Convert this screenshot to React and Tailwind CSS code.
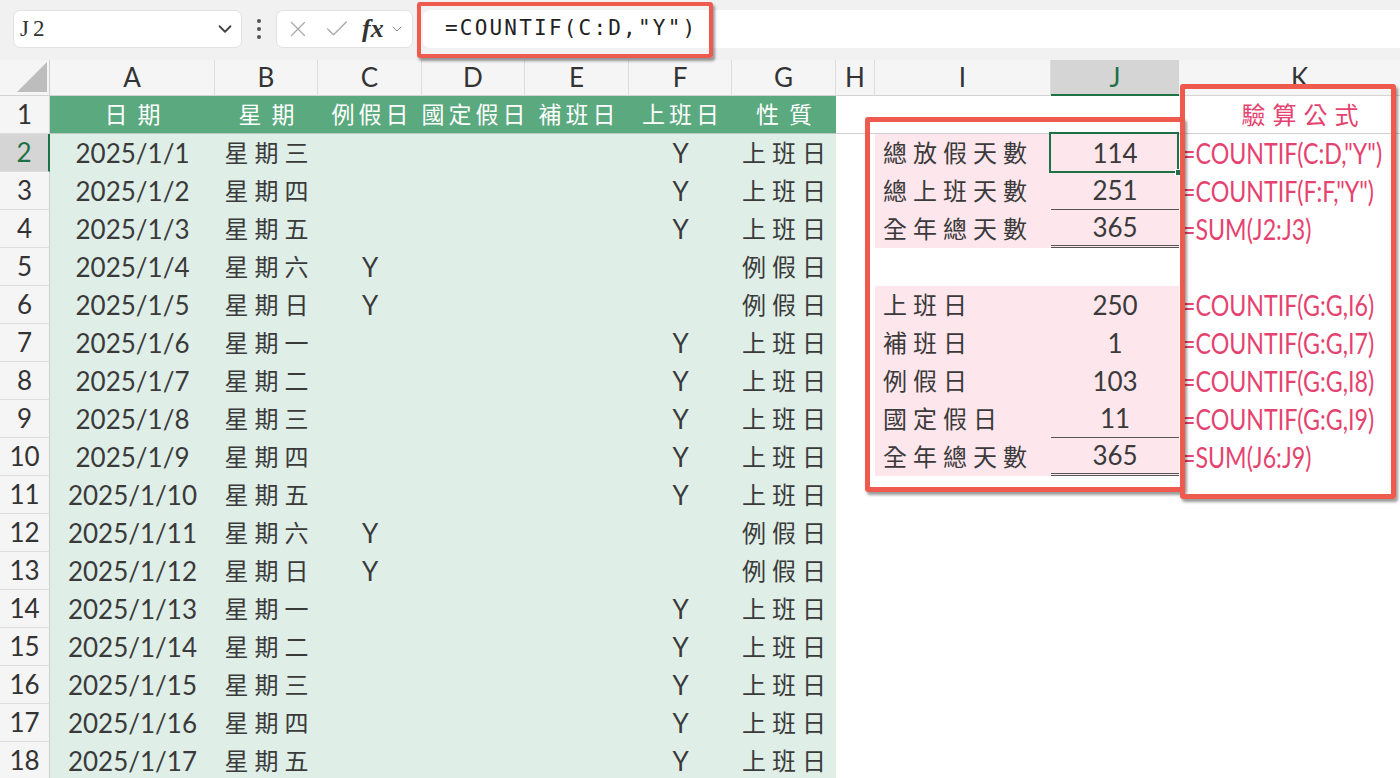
import { X, Check, ChevronDown } from 'lucide-react'

const COLS = ['A', 'B', 'C', 'D', 'E', 'F', 'G', 'H', 'I', 'J', 'K']
const WEEK = ['星期三', '星期四', '星期五', '星期六', '星期日', '星期一', '星期二']
const HEAD = ['日期', '星期', '例假日', '國定假日', '補班日', '上班日', '性質']

const SUMMARY = {
  2: ['總放假天數', '114', '=COUNTIF(C:D,"Y")'],
  3: ['總上班天數', '251', '=COUNTIF(F:F,"Y")'],
  4: ['全年總天數', '365', '=SUM(J2:J3)'],
  6: ['上班日', '250', '=COUNTIF(G:G,I6)'],
  7: ['補班日', '1', '=COUNTIF(G:G,I7)'],
  8: ['例假日', '103', '=COUNTIF(G:G,I8)'],
  9: ['國定假日', '11', '=COUNTIF(G:G,I9)'],
  10: ['全年總天數', '365', '=SUM(J6:J9)'],
}

function buildRows() {
  const rows = []
  for (let d = 1; d <= 17; d++) {
    const wd = WEEK[(d - 1) % 7]
    const off = wd === '星期六' || wd === '星期日'
    rows.push({ date: `2025/1/${d}`, wd, c: off ? 'Y' : '', f: off ? '' : 'Y', g: off ? '例假日' : '上班日' })
  }
  return rows
}

const redBox = 'absolute border-[#ee5a4e] rounded-[3px] shadow-[2px_3px_3px_rgba(0,0,0,0.4)] pointer-events-none'

function TopBar() {
  return (
    <div className="h-[60px] bg-[#f1f1f1] flex items-start pt-[10px] pl-[13px]">
      <div className="w-[229px] h-[38px] bg-white rounded-[7px] border border-[#e2e2e2] flex items-center justify-between pl-[6px] pr-[5px]">
        <span className="font-['Liberation_Serif',serif] text-[23px] tracking-[4px] text-[#333]">J2</span>
        <ChevronDown size={22} strokeWidth={2} className="text-[#444]" />
      </div>
      <div className="w-[34px] h-[38px] flex flex-col items-center justify-center gap-[4px]">
        <div className="w-[4px] h-[4px] rounded-full bg-[#555]" />
        <div className="w-[4px] h-[4px] rounded-full bg-[#555]" />
        <div className="w-[4px] h-[4px] rounded-full bg-[#555]" />
      </div>
      <div className="w-[137px] h-[38px] bg-white rounded-[7px] border border-[#e2e2e2] flex items-center pl-[8px]">
        <X size={26} strokeWidth={1.2} className="text-[#a9a9a9]" />
        <Check size={28} strokeWidth={1.2} className="text-[#a9a9a9] ml-[12px]" />
        <span className="ml-[11px] font-['Liberation_Serif',serif] italic font-semibold text-[26px] text-[#333] leading-none">fx</span>
        <ChevronDown size={16} strokeWidth={1.5} className="text-[#888] ml-[5px]" />
      </div>
      <div className="ml-[10px] flex-1 h-[38px] bg-white rounded-l-[7px] flex items-center pl-[22px]">
        <span className="font-['DejaVu_Sans_Mono',monospace] text-[21px] tracking-[2.2px] text-[#222]">=COUNTIF(C:D,"Y")</span>
      </div>
    </div>
  )
}

function ColumnHeader() {
  return (
    <>
      <div className="bg-[#f5f5f5] border-b border-[#d4d4d4] border-r border-r-[#d0d0d0] relative">
        <div className="absolute right-[2px] bottom-[3px] w-0 h-0 border-l-[30px] border-l-transparent border-b-[30px] border-b-[#bdbdbd]" />
      </div>
      {COLS.map((c) =>
        c === 'J' ? (
          <div key={c} className="bg-[#d5d5d5] border-b-2 border-[#1e7145] flex items-center justify-center text-[26px] text-[#1e7145]">
            {c}
          </div>
        ) : (
          <div key={c} className="bg-[#f5f5f5] border-b border-[#d4d4d4] border-r border-r-[#dedede] flex items-center justify-center text-[26px] text-[#333]">
            {c}
          </div>
        )
      )}
    </>
  )
}

function RowNum({ n }) {
  if (n === 2) {
    return (
      <div className="bg-[#d5d5d5] border-r-2 border-[#1e7145] border-b border-b-[#dcdcdc] flex items-center justify-center text-[26px] text-[#1e7145]">
        {n}
      </div>
    )
  }
  return (
    <div className="bg-[#f5f5f5] border-r border-[#cfcfcf] border-b border-b-[#dedede] flex items-center justify-center text-[26px] text-[#333]">
      {n}
    </div>
  )
}

function HeaderRow() {
  return (
    <>
      <RowNum n={1} />
      {HEAD.map((h) => (
        <div
          key={h}
          className={`bg-[#5ba97e] border-b border-[#b9c9bf] flex items-center justify-center text-white text-[23px] whitespace-nowrap ${
            h.length === 2 ? 'tracking-[10px] pl-[10px]' : 'tracking-[4px] pl-[4px]'
          }`}
        >
          {h}
        </div>
      ))}
      <div className="border-b border-[#cfcfcf]" />
      <div className="border-b border-[#cfcfcf]" />
      <div className="border-b border-[#cfcfcf]" />
      <div className="border-b border-[#cfcfcf] flex items-center justify-center text-[24px] tracking-[7px] pl-[7px] text-[#e5436f]">
        驗算公式
      </div>
    </>
  )
}

function DataRow({ r, row }) {
  const s = SUMMARY[r]
  const green = 'bg-[#dfeee7] flex items-center justify-center text-[#3a3a3a]'
  const cjk = 'text-[24px] tracking-[6px] pl-[6px] whitespace-nowrap'
  let jBorder = ''
  if (r === 3 || r === 9) jBorder = 'border-b border-[#555]'
  if (r === 4 || r === 10) jBorder = 'border-b-[3px] border-double border-[#555]'
  return (
    <>
      <RowNum n={r} />
      <div className={`${green} text-[26px]`}>{row.date}</div>
      <div className={`${green} ${cjk}`}>{row.wd}</div>
      <div className={`${green} text-[26px]`}>{row.c}</div>
      <div className={green} />
      <div className={green} />
      <div className={`${green} text-[26px]`}>{row.f}</div>
      <div className={`${green} ${cjk}`}>{row.g}</div>
      <div />
      <div className={`${s ? 'bg-[#fde6ec]' : ''} flex items-center pl-[8px] text-[24px] tracking-[6px] text-[#3a3a3a] whitespace-nowrap`}>
        {s ? s[0] : ''}
      </div>
      <div className={`${s ? 'bg-[#fde6ec]' : ''} ${jBorder} flex items-center justify-center text-[26px] text-[#3a3a3a]`}>
        {s ? s[1] : ''}
      </div>
      <div className="flex items-center pl-[3px] overflow-hidden">
        <span className="inline-block origin-left scale-x-[0.8] font-['Lato',sans-serif] text-[29px] text-[#e5436f] whitespace-nowrap">
          {s ? s[2] : ''}
        </span>
      </div>
    </>
  )
}

export default function App() {
  const rows = buildRows()
  return (
    <div className="w-[1400px] h-[778px] overflow-hidden relative bg-white font-['Lato','Noto_Sans_CJK_TC',sans-serif]">
      <TopBar />
      <div className="grid grid-cols-[50px_165px_103px_104px_103px_104px_103px_104px_39px_176px_128px_242px] grid-rows-[36px_repeat(18,38px)] w-[1421px]">
        <ColumnHeader />
        <HeaderRow />
        {rows.map((row, i) => (
          <DataRow key={row.date} r={i + 2} row={row} />
        ))}
      </div>

      {/* selected cell J2 */}
      <div className="absolute left-[1049px] top-[132px] w-[130px] h-[41px] border-2 border-[#1e7145] pointer-events-none">
        <div className="absolute -right-[5px] -bottom-[5px] w-[7px] h-[7px] bg-[#1e7145] border border-white" />
      </div>

      {/* annotation boxes */}
      <div className={`${redBox} left-[417px] top-[2px] w-[296px] h-[56px] border-[4px]`} />
      <div className={`${redBox} left-[865px] top-[117px] w-[320px] h-[375px] border-[5px]`} />
      <div className={`${redBox} left-[1180px] top-[84px] w-[216px] h-[415px] border-[5px]`} />
    </div>
  )
}
